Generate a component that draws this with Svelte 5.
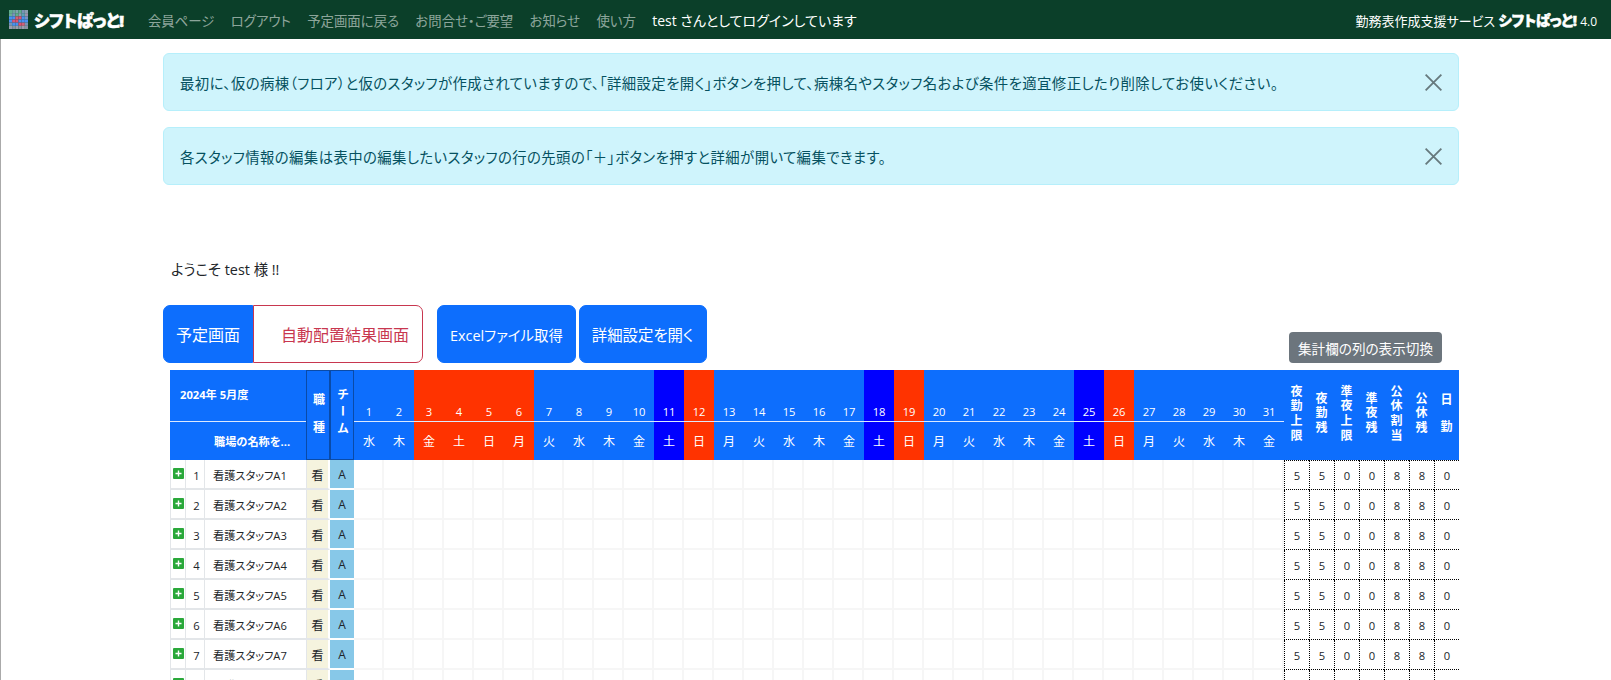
<script lang="ts">
  // Shift roster screen: navbar, notices, toolbar and the monthly grid.
  const links = ['会員ページ', 'ログアウト', '予定画面に戻る', 'お問合せ・ご要望', 'お知らせ', '使い方'];
  const notices = [
    '最初に、仮の病棟（フロア）と仮のスタッフが作成されていますので、「詳細設定を開く」ボタンを押して、病棟名やスタッフ名および条件を適宜修正したり削除してお使いください。',
    '各スタッフ情報の編集は表中の編集したいスタッフの行の先頭の「＋」ボタンを押すと詳細が開いて編集できます。',
  ];

  const weekdays = ['日', '月', '火', '水', '木', '金', '土'];
  const holidays = [3, 4, 5, 6];
  // 2024-05-01 is a Wednesday
  const days = Array.from({ length: 31 }, (_, i) => {
    const d = i + 1;
    const w = (i + 3) % 7;
    const tone = holidays.includes(d) || w === 0 ? 'red' : w === 6 ? 'navy' : '';
    return { d, w: weekdays[w], tone };
  });

  const summary = [
    { label: '夜勤上限', value: 5 },
    { label: '夜勤残', value: 5 },
    { label: '準夜上限', value: 0 },
    { label: '準夜残', value: 0 },
    { label: '公休割当', value: 8 },
    { label: '公休残', value: 8 },
    { label: '日勤', value: 0, wide: true },
  ];

  const staff = Array.from({ length: 8 }, (_, i) => ({ no: i + 1, name: `看護スタッフA${i + 1}` }));

  const logoColors = [
    ['#5fae8c', '#6aa59c', '#7fa3ad', '#5fae8c', '#7a92b4', '#8a9dae'],
    ['#6aae94', '#7a94bc', '#5fae8c', '#8a9db4', '#5fa2b4', '#9a92ae'],
    ['#4a90f0', '#4a90f0', '#d0607a', '#e05070', '#4a90f0', '#7a92c4'],
    ['#4a90f0', '#d05a80', '#e05070', '#4a90f0', '#4a90f0', '#4a90f0'],
    ['#7a92b4', '#4a90f0', '#4a90f0', '#e05070', '#d0607a', '#7a92b4'],
    ['#9a9dae', '#8a92a4', '#9a9dae', '#8a92a4', '#9a9dae', '#8a92a4'],
  ];
</script>

<nav class="navbar">
  <span class="brand">
    <svg class="logo-mark" viewBox="0 0 6 6" aria-hidden="true">
      {#each logoColors as row, y}
        {#each row as fill, x}
          <rect {x} {y} width="1" height="1" {fill} />
        {/each}
      {/each}
    </svg>
    <span class="logo-text">シフトぱっと!</span>
  </span>
  {#each links as link}
    <a class="nav-link" href="#top">{link}</a>
  {/each}
  <span class="nav-user">test さんとしてログインしています</span>
  <span class="nav-service">
    勤務表作成支援サービス <span class="logo-text small">シフトぱっと!</span> <span class="version">4.0</span>
  </span>
</nav>

<main class="page">
  <div class="notices">
    {#each notices as text}
      <div class="alert" role="alert">
        <span>{text}</span>
        <button class="alert-close" type="button" aria-label="Close">
          <svg viewBox="0 0 16 16" aria-hidden="true">
            <path d="M.6.6 15.4 15.4M15.4.6.6 15.4" />
          </svg>
        </button>
      </div>
    {/each}
  </div>

  <p class="welcome">ようこそ test 様 !!</p>

  <div class="toolbar">
    <div class="btn-group">
      <button class="btn primary first" type="button">予定画面</button>
      <button class="btn outline-danger" type="button">自動配置結果画面</button>
    </div>
    <button class="btn primary excel" type="button">Excelファイル取得</button>
    <button class="btn primary detail" type="button">詳細設定を開く</button>
    <button class="btn-toggle" type="button">集計欄の列の表示切換</button>
  </div>

  <table class="roster">
    <colgroup>
      <col class="c-plus" /><col class="c-no" /><col class="c-name" />
      <col class="c-job" /><col class="c-team" />
      {#each days as _}<col class="c-day" />{/each}
      {#each summary as _}<col class="c-sum" />{/each}
    </colgroup>
    <thead>
      <tr class="head-top">
        <th class="period" colspan="3"><span>2024年 5月度</span></th>
        <th class="stack job" rowspan="2"><span>職種</span></th>
        <th class="stack team" rowspan="2"><span>チーム</span></th>
        {#each days as day}
          <th class="date {day.tone}">{day.d}</th>
        {/each}
        {#each summary as item}
          <th class="sum-head" class:wide={item.wide} rowspan="2"><span>{item.label}</span></th>
        {/each}
      </tr>
      <tr class="head-bottom">
        <th class="ward" colspan="3">職場の名称を...</th>
        {#each days as day}
          <th class="weekday {day.tone}">{day.w}</th>
        {/each}
      </tr>
    </thead>
    <tbody>
      {#each staff as person}
        <tr>
          <td class="plus">
            <svg viewBox="0 0 11 11" aria-hidden="true">
              <rect width="11" height="11" rx="1" fill="#2aa83a" />
              <path d="M5.5 2.5v6M2.5 5.5h6" stroke="#fff" stroke-width="1.4" />
            </svg>
          </td>
          <td class="no">{person.no}</td>
          <td class="name">{person.name}</td>
          <td class="job-cell">看</td>
          <td class="team-cell">A</td>
          {#each days as _}<td class="day"></td>{/each}
          {#each summary as item}<td class="sum">{item.value}</td>{/each}
        </tr>
      {/each}
    </tbody>
  </table>
</main>

<style>
  :global(html), :global(body) {
    height: 680px;
    overflow: hidden;
  }

  :global(body) {
    font-family: "Open Sans", "Noto Sans CJK JP", sans-serif;
    font-feature-settings: "palt";
    color: #212529;
    background: #fff;
  }

  .navbar {
    display: flex;
    align-items: center;
    height: 39px;
    padding-left: 9px;
    padding-right: 14px;
    background: #0b3f29;
    font-size: 13.4px;
    white-space: nowrap;
  }

  .brand {
    display: flex;
    align-items: center;
    gap: 6px;
    margin-right: 16px;
  }

  .logo-mark {
    width: 19px;
    height: 19px;
    display: block;
  }

  .logo-text {
    color: #fff;
    font-size: 16.6px;
    font-weight: 900;
    letter-spacing: -0.4px;
    -webkit-text-stroke: 0.5px #fff;
  }

  .logo-text.small {
    font-size: 14.4px;
    letter-spacing: -0.3px;
  }

  .nav-link {
    padding: 0 8.2px;
    color: rgba(255, 255, 255, 0.55);
    text-decoration: none;
  }

  .nav-user {
    margin-left: 8.2px;
    color: #fff;
    font-size: 14px;
  }

  .nav-service {
    margin-left: auto;
    color: #fff;
    font-size: 13px;
  }

  .version {
    font-size: 12px;
  }

  .page {
    border-left: 1px solid #aaa;
    box-sizing: border-box;
    width: 1611px;
    padding-top: 14px;
    padding-left: 162px;
  }

  .notices {
    display: flex;
    flex-direction: column;
    gap: 16px;
    width: 1296px;
  }

  .alert {
    display: flex;
    align-items: center;
    justify-content: space-between;
    box-sizing: border-box;
    height: 58px;
    padding: 0 16px;
    border: 1px solid #b6effb;
    border-radius: 6px;
    background: #cff4fc;
    color: #055160;
    font-size: 14.4px;
    letter-spacing: 0.4px;
  }

  .alert-close {
    display: flex;
    padding: 0;
    border: 0;
    background: none;
  }

  .alert-close svg {
    width: 17px;
    height: 17px;
    fill: none;
    stroke: #000;
    stroke-width: 1.7;
    opacity: 0.5;
  }

  .welcome {
    margin: 75px 0 0 8px;
    font-size: 14.4px;
    line-height: 20px;
  }

  .toolbar {
    display: flex;
    align-items: flex-end;
    gap: 3px;
    width: 1296px;
    margin-top: 25px;
  }

  .btn-group {
    display: flex;
    margin-right: 11px;
  }

  .btn {
    box-sizing: border-box;
    height: 58px;
    padding: 0 12px;
    border: 1px solid #0d6efd;
    border-radius: 7px;
    font: inherit;
    font-size: 16px;
    font-feature-settings: "palt";
    white-space: nowrap;
  }

  .primary {
    background: #0d6efd;
    color: #fff;
  }

  .first {
    border-radius: 7px 0 0 7px;
  }

  .excel {
    font-size: 14.4px;
  }

  .detail {
    font-size: 15.4px;
  }

  .outline-danger {
    padding-left: 27px;
    padding-right: 13px;
    border-color: #c8374f;
    border-radius: 0 7px 7px 0;
    background: #fff;
    color: #c8374f;
  }

  .btn-toggle {
    height: 31px;
    margin-left: auto;
    margin-right: 17px;
    padding: 0 9px;
    border: 0;
    border-radius: 4px;
    background: #6c757d;
    color: #fff;
    font: inherit;
    font-size: 13.6px;
    font-feature-settings: "palt";
    white-space: nowrap;
  }

  .roster {
    table-layout: fixed;
    border-collapse: separate;
    border-spacing: 0;
    width: 1289px;
    margin: 7px 0 0 7px;
    font-size: 11.2px;
  }

  .c-plus { width: 16px; }
  .c-no { width: 19px; }
  .c-name { width: 101px; }
  .c-job { width: 24px; }
  .c-team { width: 24px; }
  .c-day { width: 30px; }
  .c-sum { width: 25px; }

  th {
    padding: 0;
    background: #0d6efd;
    color: #fff;
    font-weight: 400;
    text-align: center;
  }

  .head-top th {
    height: 51px;
  }

  .head-bottom th {
    height: 38px;
  }

  .period {
    border-bottom: 1px solid #dce9ff;
    font-weight: 700;
    text-align: left;
  }

  .period span {
    display: block;
    padding: 0 0 4px 10px;
  }

  .ward {
    padding-left: 44px;
    font-size: 11.2px;
    font-weight: 700;
    text-align: left;
    vertical-align: middle;
  }

  .stack {
    box-sizing: border-box;
    border: 1px solid #0a4ba8;
    font-size: 12px;
    font-weight: 700;
  }

  .stack span, .sum-head span {
    display: inline-block;
    writing-mode: vertical-rl;
    text-orientation: upright;
  }

  .stack.job span {
    padding-top: 16px;
    letter-spacing: 16px;
  }

  .stack.team span {
    letter-spacing: 5px;
  }

  .date {
    box-sizing: border-box;
    vertical-align: bottom;
    padding-bottom: 1px;
    border-bottom: 1px solid #dce9ff;
    line-height: 16px;
  }

  .weekday {
    font-size: 12px;
  }

  .red { background: #ff3300; }
  .navy { background: #0000ff; }

  .sum-head {
    font-size: 12px;
    font-weight: 700;
  }

  .sum-head span {
    margin-right: 2px;
    padding-top: 2px;
    letter-spacing: 2.7px;
  }

  .sum-head.wide span {
    padding-top: 16px;
    letter-spacing: 15.6px;
  }

  tbody td {
    box-sizing: border-box;
    height: 30px;
    padding: 1px 0 0;
    border-bottom: 2px solid #e3e6e9;
    text-align: center;
  }

  .plus {
    border-left: 1px solid #e3e6e9;
    border-right: 1px solid #e3e6e9;
    vertical-align: top;
  }

  .plus svg {
    display: block;
    width: 11px;
    height: 11px;
    margin: 7px 0 0 2px;
  }

  .no {
    border-right: 1px solid #e3e6e9;
    padding-top: 3px;
    padding-left: 3px;
    font-size: 11.2px;
  }

  .name {
    padding-left: 8px;
    font-size: 11.2px;
    text-align: left;
    white-space: nowrap;
  }

  .job-cell {
    background: #f5f3de;
    border-left: 1px solid #e3e6e9;
    border-right: 2px solid #fff;
    font-size: 12px;
  }

  .team-cell {
    background: #87c8e8;
    border-bottom-color: #fff;
    font-size: 12px;
  }

  .day {
    border-right: 2px solid #f6f6f6;
    border-bottom-color: #f6f6f6;
  }

  .sum {
    border-left: 1px dotted #000;
    border-bottom: 1px dotted #000;
    font-size: 11.2px;
  }

  tbody tr:first-child .sum {
    border-top: 1px dotted #000;
  }
</style>
